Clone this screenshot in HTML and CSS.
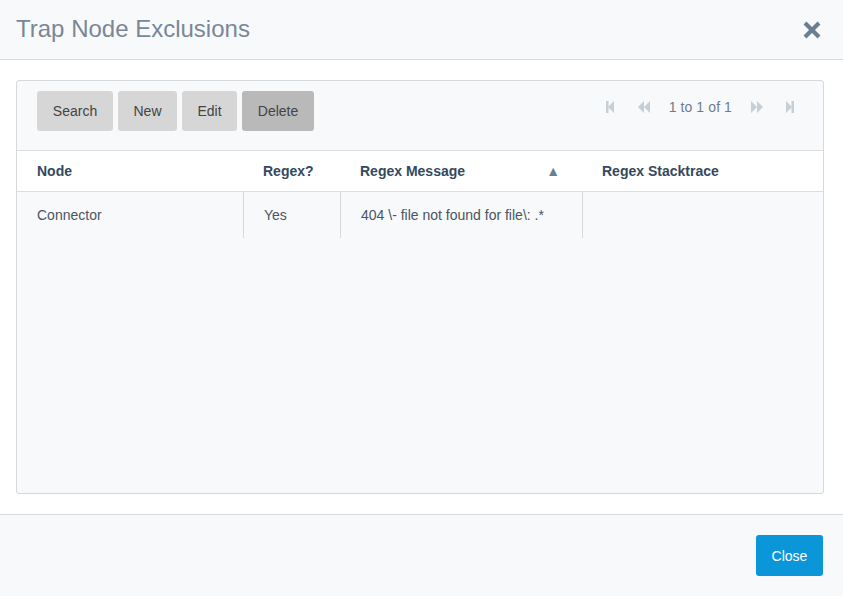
FILE: index.html
```html
<!DOCTYPE html>
<html>
<head>
<meta charset="utf-8">
<link rel="stylesheet" href="styles.css">
</head>
<body>
<div class="modal">
  <div class="modal-header">
    <h1 class="title">Trap Node Exclusions</h1>
    <svg class="close-x" width="20" height="20" viewBox="0 0 20 20"><path d="M3 3 L17 17 M17 3 L3 17" stroke="#6b7e91" stroke-width="4.2" stroke-linecap="butt"/></svg>
  </div>
  <div class="modal-body">
    <div class="panel">
      <div class="toolbar">
        <div class="btns">
          <button class="btn b-search">Search</button>
          <button class="btn b-new">New</button>
          <button class="btn b-edit">Edit</button>
          <button class="btn btn-active">Delete</button>
        </div>
        <div class="pager">
          <svg width="8" height="12" viewBox="0 0 8 12"><rect x="0" y="0" width="2.5" height="12" fill="#c6ced6"/><path d="M8 0 L2 6 L8 12 Z" fill="#c6ced6"/></svg>
          <svg class="p-prev" width="12" height="12" viewBox="0 0 12 12"><path d="M6 0 L0 6 L6 12 Z M12 0 L6 6 L12 12 Z" fill="#c6ced6"/></svg>
          <span class="p-text">1 to 1 of 1</span>
          <svg class="p-next" width="12" height="12" viewBox="0 0 12 12"><path d="M0 0 L6 6 L0 12 Z M6 0 L12 6 L6 12 Z" fill="#c6ced6"/></svg>
          <svg class="p-last" width="8" height="12" viewBox="0 0 8 12"><path d="M0 0 L6 6 L0 12 Z" fill="#c6ced6"/><rect x="5.5" y="0" width="2.5" height="12" fill="#c6ced6"/></svg>
        </div>
      </div>
      <div class="grid-head">
        <div class="hcell h1">Node</div>
        <div class="hcell h2">Regex?</div>
        <div class="hcell h3">Regex Message <span class="sort">&#9650;</span></div>
        <div class="hcell h4">Regex Stacktrace</div>
      </div>
      <div class="grid-row">
        <div class="cell c1">Connector</div>
        <div class="cell c2">Yes</div>
        <div class="cell c3">404 \- file not found for file\: .*</div>
        <div class="cell c4 last"></div>
      </div>
    </div>
  </div>
  <div class="modal-footer">
    <button class="btn-primary">Close</button>
  </div>
</div>
</body>
</html>
```
FILE: styles.css
```css
* { box-sizing: border-box; }
html, body { margin: 0; padding: 0; background: #fff; }
body { font-family: "Liberation Sans", Arial, sans-serif; font-size: 14px; color: #4a5561; }
.modal { width: 843px; height: 596px; display: flex; flex-direction: column; }
.modal-header {
  height: 60px; background: #f8f9fb; border-bottom: 1px solid #d9dadb;
  display: flex; align-items: center; justify-content: space-between;
  padding: 0 21px 0 16px;
}
.title { margin: 0; font-size: 24px; font-weight: normal; color: #788898; line-height: 1; padding-bottom: 1px; }
.close-x { display: block; }
.modal-body { padding: 20px 19px 20px 16px; background: #fff; }
.panel {
  height: 414px; border: 1px solid #d6d9dc; border-radius: 3px; background: #f8f9fb;
  display: flex; flex-direction: column; overflow: hidden;
}
.toolbar {
  height: 70px; border-bottom: 1px solid #dcdfe2; display: flex; justify-content: space-between;
  align-items: flex-start; padding: 10px 29px 0 20px;
}
.btns { display: flex; gap: 5px; }
.btn {
  height: 40px; border: 0; border-radius: 3px; background: #d6d6d6; color: #444;
  font-family: inherit; font-size: 14px; padding: 0; margin: 0;
}
.b-search { width: 76px; }
.b-new { width: 59px; }
.b-edit { width: 55px; }
.btn-active { background: #b9b9b9; width: 72px; }
.pager { display: flex; align-items: center; margin-top: 10px; height: 12px; }
.pager svg { display: block; }
.p-prev { margin-left: 24px; }
.p-text { margin-left: 19px; color: #6f7c8b; font-size: 14px; letter-spacing: 0.1px; }
.p-next { margin-left: 19px; }
.p-last { margin-left: 23px; }
.grid-head { height: 41px; background: #fff; border-bottom: 1px solid #dcdfe2; display: flex; }
.hcell { font-weight: bold; color: #34495e; display: flex; align-items: center; padding-left: 20px; }
.h1 { width: 226px; }
.h2 { width: 97px; }
.h3 { width: 242px; justify-content: space-between; padding-right: 22px; }
.h4 { flex: 1; }
.sort { color: #6b7e91; font-size: 14px; }
.grid-row { height: 46px; display: flex; }
.c1 { width: 227px; }
.c2 { width: 97px; }
.c3 { width: 242px; }
.c4 { flex: 1; }
.cell { display: flex; align-items: center; padding-left: 20px; color: #4a5561; border-right: 1px solid #d6d9dc; }
.cell.last { border-right: 0; }
.modal-footer {
  flex: 1; background: #f8f9fb; border-top: 1px solid #d9dadb;
  display: flex; justify-content: flex-end; align-items: flex-start; padding: 20px 20px 0 0;
}
.btn-primary {
  width: 67px; height: 41px; border: 0; border-radius: 3px; background: #0c96da; color: #fff;
  font-family: inherit; font-size: 14px; padding: 0;
}
```
